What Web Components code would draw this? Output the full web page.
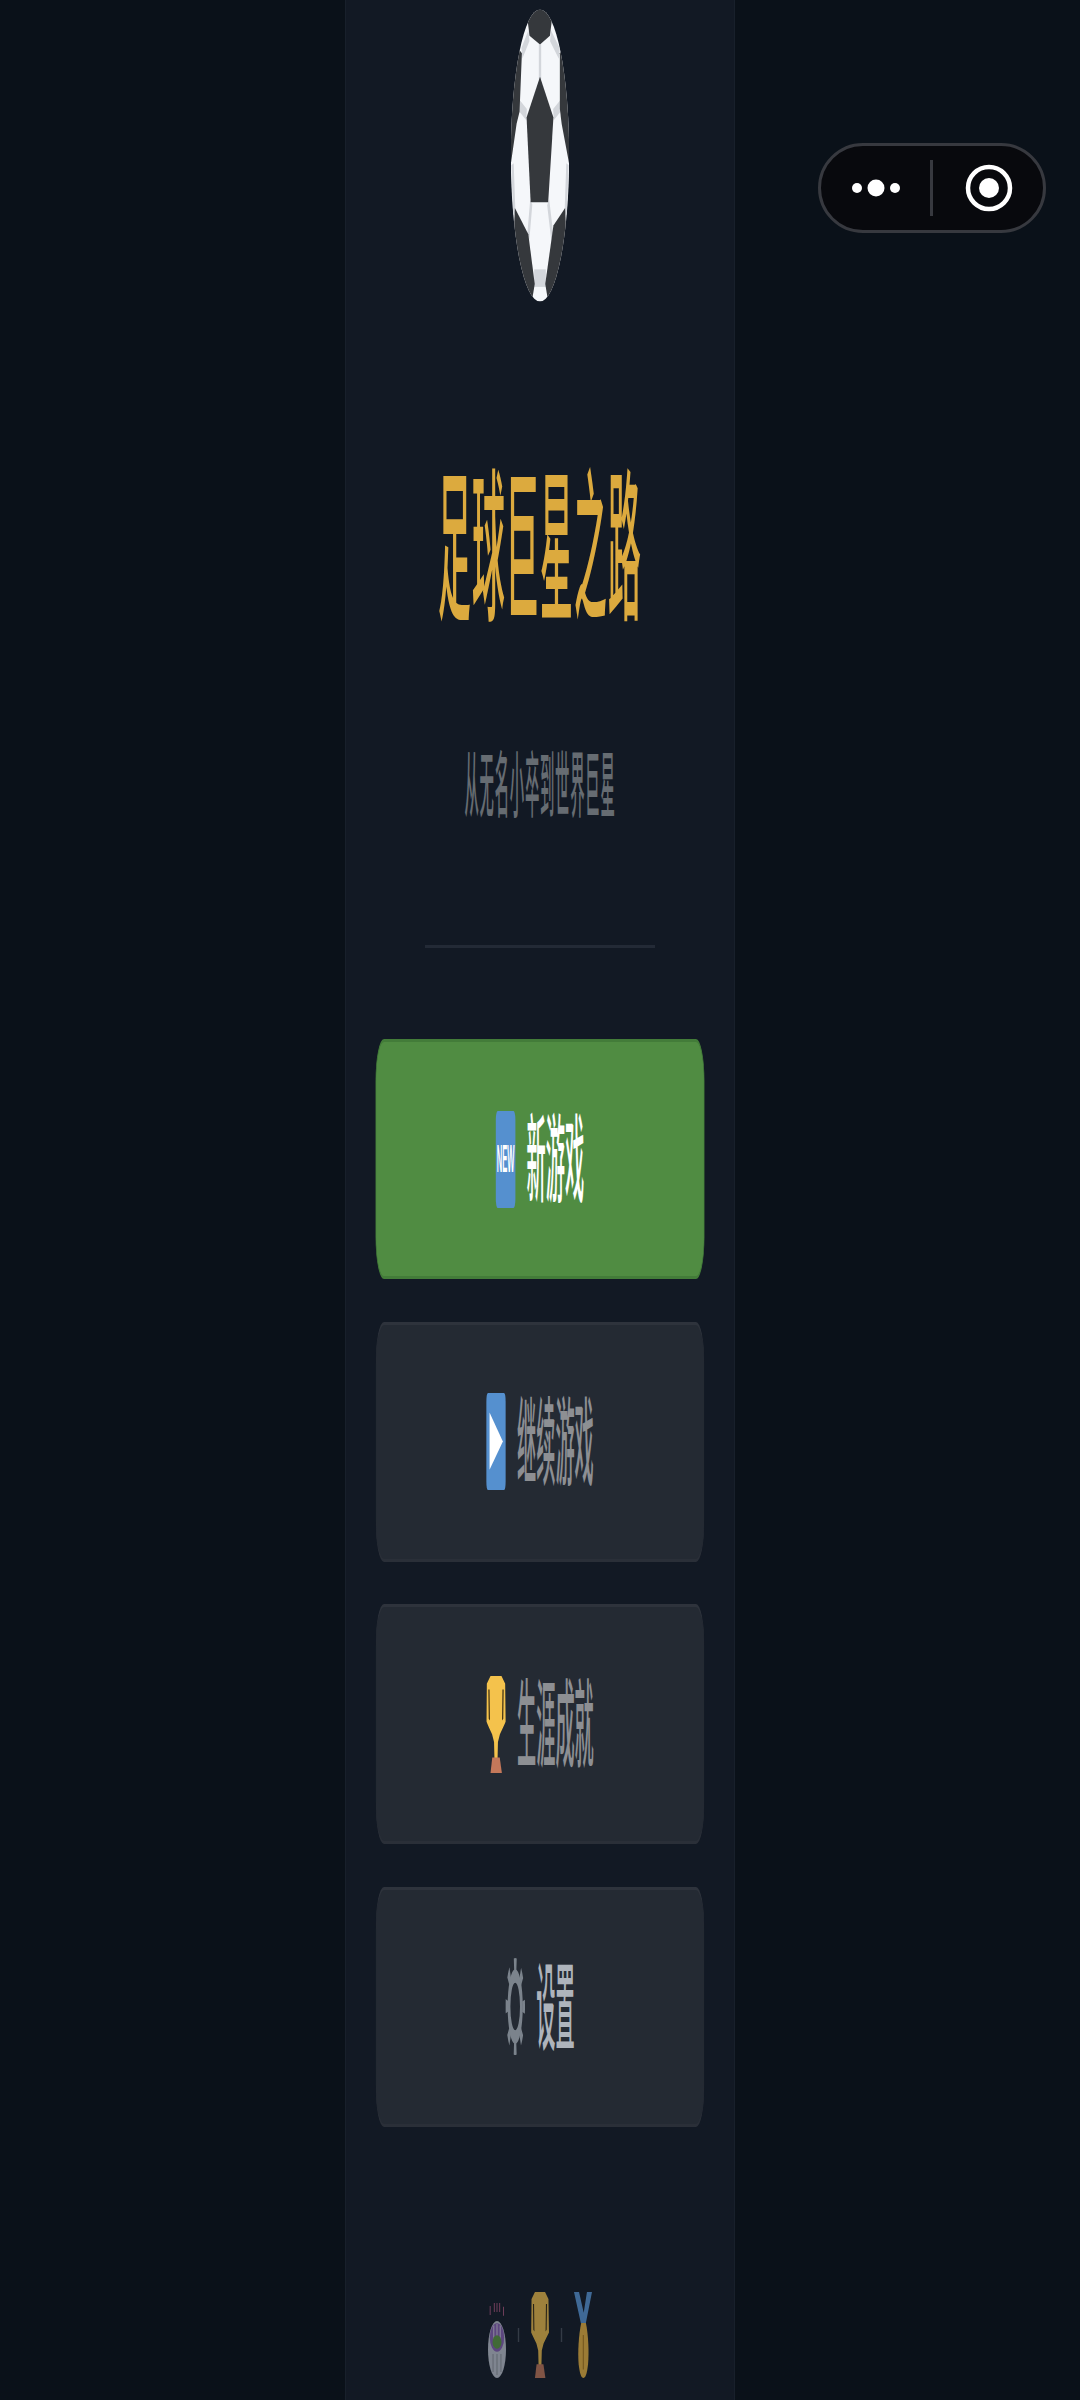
<!DOCTYPE html>
<html lang="zh-CN">
<head>
<meta charset="utf-8">
<title>足球巨星之路</title>
<style>
    html, body { margin: 0; padding: 0; background: #0a1119; overflow: hidden; }
    body { width: 1080px; height: 2400px; font-family: "Noto Sans CJK SC", "Noto Sans", sans-serif; }
</style>
</head>
<body>
<game-screen>
    <soccer-ball></soccer-ball>
    <game-title title-text="足球巨星之路" subtitle="从无名小卒到世界巨星"></game-title>
    <menu-button variant="primary" icon="new">新游戏</menu-button>
    <menu-button icon="play">继续游戏</menu-button>
    <menu-button icon="trophy">生涯成就</menu-button>
    <menu-button variant="soft" icon="gear">设置</menu-button>
    <footer-icons></footer-icons>
</game-screen>
<capsule-button></capsule-button>

<script>
// the whole column is drawn on a wide stage and squeezed to 20% horizontally
const SQUEEZE = 0.2;

const TROPHY = `<svg viewBox="0 0 100 100" preserveAspectRatio="none">
        <path d="M22 0H78L97 8 100 47 86 53 70 60 60 68 58 85H42L40 68 30 60 14 53 1 47 3 8Z" fill="#f4c24c"/>
        <path d="M11 14L17 14 19 46 13 44Z M89 14L83 14 81 46 87 44Z" fill="#33270f"/>
        <polygon points="31,84 69,84 80,100 22,100" fill="#c4785a"/>
    </svg>`;

const ICONS = {
    new: `<span class="badge">NEW</span>`,
    play: `<svg viewBox="0 0 100 100" preserveAspectRatio="none">
            <rect width="100" height="100" rx="9" fill="#5590cf"/>
            <polygon points="17,20 85,50 17,79" fill="#fff"/>
        </svg>`,
    trophy: TROPHY,
    gear: `<svg viewBox="0 0 100 100" preserveAspectRatio="none">
            <circle cx="50" cy="50" r="31.5" fill="none" stroke="#7b838c" stroke-width="14"/>
            <circle cx="50" cy="50" r="43" fill="none" stroke="#7b838c" stroke-width="14" stroke-dasharray="13 20.77" stroke-dashoffset="6.5"/>
        </svg>`,
    stadium: `<svg viewBox="0 0 100 100" preserveAspectRatio="none">
            <path d="M12 4V16M35 0V12M50 0V12M65 0V12M86 5V17" stroke="#b85a84" stroke-width="5" fill="none"/>
            <ellipse cx="50" cy="62" rx="50" ry="38" fill="#c2c8d2"/>
            <ellipse cx="50" cy="46" rx="40" ry="19" fill="#8a63b8"/>
            <path d="M32 30V50M50 28V50M68 30V50" stroke="#cfc6e0" stroke-width="6"/>
            <ellipse cx="50" cy="52" rx="25" ry="9" fill="#5f9a42"/>
            <path d="M28 68V92M50 68V96M72 68V92" stroke="#8b909a" stroke-width="5"/>
        </svg>`,
    cup: TROPHY,
    medal: `<svg viewBox="0 0 100 100" preserveAspectRatio="none">
            <polygon points="0,0 28,0 54,24 72,0 100,0 66,36 38,36" fill="#5b9bdc"/>
            <path d="M40 36H66C80 50 84 70 78 84 72 96 62 100 52 100 42 100 32 96 26 84 20 70 26 50 40 36Z" fill="#f0b840"/>
            <path d="M52 50V90" stroke="#b98420" stroke-width="7"/>
        </svg>`
};

class GameScreen extends HTMLElement {
    constructor() {
        super();
        this.attachShadow({ mode: 'open' });
        this.shadowRoot.innerHTML = `
            <style>
                :host {
                    display: block;
                    width: 390px;
                    height: 2400px;
                    margin: 0 auto;
                    box-sizing: border-box;
                    background: #121924;
                    box-shadow: inset 1px 0 0 #18202b, inset -1px 0 0 #18202b;
                    overflow: hidden;
                }
                .stage {
                    width: ${390 / SQUEEZE}px;
                    height: 2400px;
                    transform: scaleX(${SQUEEZE});
                    transform-origin: left top;
                    display: flex;
                    flex-direction: column;
                    align-items: center;
                    padding-top: 9px;
                    box-sizing: border-box;
                }
            </style>
            <div class="stage"><slot></slot></div>
        `;
    }
}

class SoccerBall extends HTMLElement {
    constructor() {
        super();
        this.attachShadow({ mode: 'open' });
        this.shadowRoot.innerHTML = `
            <style>
                :host { display: block; width: 292px; height: 293px; }
                svg { display: block; width: 100%; height: 100%; }
            </style>
            <svg viewBox="0 0 100 100">
                <defs><clipPath id="round"><circle cx="50" cy="50" r="50"/></clipPath></defs>
                <g clip-path="url(#round)">
                    <rect width="100" height="100" fill="#f5f7fa"/>
                    <g stroke="#d3d6db" stroke-width="4" fill="none">
                        <path d="M50 12V24M31 9L19 15M68 9L83 15M27 36L15 33M73 36L85 33M35 66L30 78M64 66L71 78M97 53L94 70M3 53L6 70"/>
                    </g>
                    <rect x="40" y="89" width="20" height="6" fill="#d3d6db"/>
                    <g fill="#35383c">
                        <polygon points="39,0 61,0 70,4 67,9 50,12 32,9 29,4"/>
                        <polygon points="50,23 73,37 64,66 34,66 27,37"/>
                        <polygon points="84,15 84,34 87,39 100,53 100,10"/>
                        <polygon points="19,15 15,35 10,39 0,53 0,10"/>
                        <polygon points="7,68 30,77 41,94 36,100 0,100"/>
                        <polygon points="93,68 73,74 59,94 64,100 100,100"/>
                    </g>
                </g>
            </svg>
        `;
    }
}

class GameTitle extends HTMLElement {
    constructor() {
        super();
        this.attachShadow({ mode: 'open' });
        this.shadowRoot.innerHTML = `
            <style>
                :host {
                    display: flex;
                    flex-direction: column;
                    align-items: center;
                    font-family: "Noto Sans CJK SC", "Noto Sans", sans-serif;
                }
                h1 {
                    margin: 150px 0 0;
                    font-size: 164px;
                    line-height: 168px;
                    letter-spacing: 6px;
                    font-weight: 500;
                    color: #dcaa3e;
                    white-space: nowrap;
                }
                p {
                    margin: 120px 0 0;
                    font-size: 72px;
                    line-height: 80px;
                    letter-spacing: 3.5px;
                    font-weight: 500;
                    color: #666c72;
                    white-space: nowrap;
                }
                .rule {
                    width: 1150px;
                    height: 3px;
                    margin: 125px 0 91px;
                    background: #232a36;
                }
            </style>
            <h1></h1>
            <p></p>
            <div class="rule"></div>
        `;
        this.shadowRoot.querySelector('h1').textContent = this.getAttribute('title-text');
        this.shadowRoot.querySelector('p').textContent = this.getAttribute('subtitle');
    }
}

class MenuButton extends HTMLElement {
    constructor() {
        super();
        this.attachShadow({ mode: 'open' });
        this.shadowRoot.innerHTML = `
            <style>
                :host {
                    display: flex;
                    align-items: center;
                    justify-content: center;
                    gap: 56px;
                    width: 1644px;
                    height: 240px;
                    margin-bottom: 42.6px;
                    box-sizing: border-box;
                    background: #242a33;
                    border: 3px solid #272c35;
                    border-top-color: #2e333c;
                    border-bottom-color: #2a2f38;
                    border-radius: 42px;
                    font-family: "Noto Sans CJK SC", "Noto Sans", sans-serif;
                    font-size: 96px;
                    line-height: 100px;
                    font-weight: 500;
                    color: #8d8f93;
                    white-space: nowrap;
                }
                :host([variant="primary"]) {
                    background: #508c42;
                    border-color: #437c39;
                    color: #fff;
                }
                :host([variant="soft"]) {
                    color: #aeb4bc;
                }
                .icon {
                    display: block;
                    width: 98px;
                    height: 97px;
                    flex: none;
                }
                .label { margin-bottom: 12px; }
                svg { display: block; width: 100%; height: 100%; }
                .badge {
                    display: flex;
                    align-items: center;
                    justify-content: center;
                    height: 100%;
                    background: #5590cf;
                    border-radius: 9px;
                    font-family: "Liberation Sans", sans-serif;
                    font-size: 38px;
                    font-weight: 700;
                    color: #fff;
                }
            </style>
            <span class="icon">${ICONS[this.getAttribute('icon')]}</span>
            <span class="label"><slot></slot></span>
        `;
    }
}

class FooterIcons extends HTMLElement {
    constructor() {
        super();
        this.attachShadow({ mode: 'open' });
        this.shadowRoot.innerHTML = `
            <style>
                :host {
                    display: flex;
                    align-items: center;
                    gap: 59px;
                    margin-top: 122px;
                    opacity: 0.62;
                }
                .icon { display: block; width: 90px; height: 86px; }
                svg { display: block; width: 100%; height: 100%; }
                .stadium { height: 75px; margin-top: 12px; }
                .sep { width: 7px; height: 14px; background: #4a505c; }
            </style>
            <span class="icon stadium">${ICONS.stadium}</span>
            <span class="sep"></span>
            <span class="icon">${ICONS.cup}</span>
            <span class="sep"></span>
            <span class="icon">${ICONS.medal}</span>
        `;
    }
}

class CapsuleButton extends HTMLElement {
    constructor() {
        super();
        this.attachShadow({ mode: 'open' });
        this.shadowRoot.innerHTML = `
            <style>
                :host {
                    position: absolute;
                    left: 818px;
                    top: 143px;
                    width: 228px;
                    height: 90px;
                    box-sizing: border-box;
                    display: flex;
                    align-items: center;
                    background: #08090d;
                    border: 3px solid #37393f;
                    border-radius: 45px;
                }
                .half { flex: 1; display: flex; align-items: center; justify-content: center; }
                .half + .line + .half { padding-left: 1px; }
                .half:first-child { padding-right: 2px; margin-right: 2px; }
                .line { width: 3px; height: 56px; background: #37393f; flex: none; }
                svg { display: block; }
            </style>
            <div class="half">
                <svg width="50" height="20" viewBox="0 0 50 20">
                    <circle cx="6" cy="10" r="5" fill="#fff"/>
                    <circle cx="25" cy="10" r="8.5" fill="#fff"/>
                    <circle cx="44" cy="10" r="5" fill="#fff"/>
                </svg>
            </div>
            <div class="line"></div>
            <div class="half">
                <svg width="48" height="48" viewBox="0 0 48 48">
                    <circle cx="24" cy="24" r="21" fill="none" stroke="#fff" stroke-width="4.5"/>
                    <circle cx="24" cy="24" r="10" fill="#fff"/>
                </svg>
            </div>
        `;
    }
}

customElements.define('game-screen', GameScreen);
customElements.define('soccer-ball', SoccerBall);
customElements.define('game-title', GameTitle);
customElements.define('menu-button', MenuButton);
customElements.define('footer-icons', FooterIcons);
customElements.define('capsule-button', CapsuleButton);
</script>
</body>
</html>
